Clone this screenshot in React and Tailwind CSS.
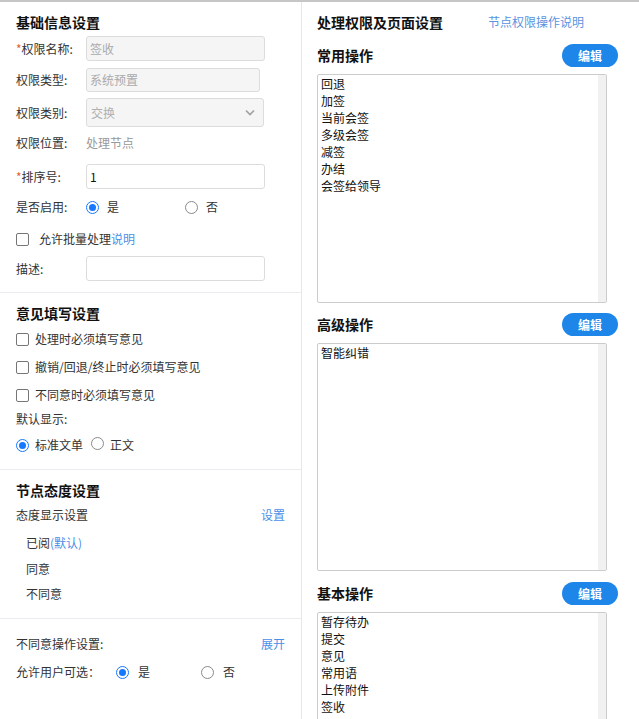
import React from 'react';

const font = { fontFamily: '"Noto Sans CJK SC", "Microsoft YaHei", sans-serif' };

const Radio = ({ checked }) => (
  <span
    className={`inline-flex h-[13px] w-[13px] shrink-0 items-center justify-center rounded-full border ${
      checked ? 'border-[#1677ff]' : 'border-[#8a8a8a]'
    } bg-white`}
  >
    {checked && <span className="h-[7px] w-[7px] rounded-full bg-[#1677ff]" />}
  </span>
);

const Checkbox = () => (
  <span className="inline-block h-[13px] w-[13px] shrink-0 rounded-[2px] border border-[#767676] bg-white" />
);

const Label = ({ children, required }) => (
  <span className="w-[70px] shrink-0 text-[12px] text-[#333]">
    {required && <span className="text-[#e0632b]">*</span>}
    {children}
  </span>
);

const SectionTitle = ({ children, className = '' }) => (
  <div className={`h-[20px] text-[14px] font-bold leading-[20px] text-[#111] ${className}`}>{children}</div>
);

const ListBox = ({ items, height }) => (
  <div className={`relative w-[290px] rounded-[2px] border border-[#cccccc] bg-white ${height}`}>
    <div className="absolute right-0 top-0 bottom-0 w-[8px] bg-[#f1f1f1]" />
    <div className="px-[3px] text-[12px] leading-[17px] text-[#111]">
      {items.map((item) => (
        <div key={item}>{item}</div>
      ))}
    </div>
  </div>
);

const OpGroup = ({ title, items, height, className = '' }) => (
  <div className={className}>
    <div className="flex h-[23px] w-[301px] items-center justify-between">
      <span className="text-[14px] font-bold text-[#111]">{title}</span>
      <button className="h-[23px] w-[56px] rounded-full bg-[#1e86e8] text-[12px] font-bold text-white">编辑</button>
    </div>
    <div className="mt-[7px]">
      <ListBox items={items} height={height} />
    </div>
  </div>
);

export default function App() {
  return (
    <div style={font} className="flex h-[719px] w-[639px] overflow-hidden border-t-2 border-[#c6c6c6] bg-white">
      {/* left column */}
      <div className="w-[302px] shrink-0 border-r border-[#e6e6ee]">
        <div className="px-[16px] pt-[10px]">
          <SectionTitle>基础信息设置</SectionTitle>
          <div className="mt-[4px] flex h-[25px] items-center">
            <Label required>权限名称:</Label>
            <div className="flex h-[25px] w-[179px] items-center rounded-[3px] border border-[#dcdcdc] bg-[#f5f5f5] px-[3px] text-[12px] text-[#aaa]">
              签收
            </div>
          </div>
          <div className="mt-[7px] flex h-[24px] items-center">
            <Label>权限类型:</Label>
            <div className="flex h-[24px] w-[174px] items-center rounded-[3px] border border-[#dcdcdc] bg-[#f5f5f5] px-[3px] text-[12px] text-[#aaa]">
              系统预置
            </div>
          </div>
          <div className="mt-[6px] flex h-[29px] items-center">
            <Label>权限类别:</Label>
            <div className="flex h-[29px] w-[178px] items-center justify-between rounded-[3px] border border-[#dcdcdc] bg-[#f5f5f5] pl-[4px] pr-[8px] text-[12px] text-[#b0b0b0]">
              交换
              <svg width="10" height="7" viewBox="0 0 10 7" fill="none">
                <path d="M1 1.5L5 5.5L9 1.5" stroke="#a0a0a0" strokeWidth="1.6" />
              </svg>
            </div>
          </div>
          <div className="mt-[6px] flex h-[20px] items-center">
            <Label>权限位置:</Label>
            <span className="text-[12px] text-[#999]">处理节点</span>
          </div>
          <div className="mt-[11px] flex h-[25px] items-center">
            <Label required>排序号:</Label>
            <div className="flex h-[25px] w-[179px] items-center rounded-[3px] border border-[#dcdcdc] bg-white px-[3px] text-[12px] text-[#111]">
              1
            </div>
          </div>
          <div className="mt-[8px] flex h-[20px] items-center text-[12px] text-[#333]">
            <Label>是否启用:</Label>
            <span className="flex w-[99px] items-center">
              <Radio checked />
              <span className="ml-[8px]">是</span>
            </span>
            <Radio />
            <span className="ml-[8px]">否</span>
          </div>
          <div className="mt-[12px] flex h-[20px] items-center text-[12px] text-[#333]">
            <Checkbox />
            <span className="ml-[10px]">允许批量处理</span>
            <span className="text-[#4a8fe7]">说明</span>
          </div>
          <div className="mt-[7px] flex h-[25px] items-center">
            <Label>描述:</Label>
            <div className="h-[25px] w-[179px] rounded-[3px] border border-[#dcdcdc] bg-white" />
          </div>
        </div>

        <div className="mt-[11px] border-t border-[#ebebf0] px-[16px] pt-[10px]">
          <SectionTitle>意见填写设置</SectionTitle>
          <div className="mt-[2px]">
            {['处理时必须填写意见', '撤销/回退/终止时必须填写意见', '不同意时必须填写意见'].map((t) => (
              <div key={t} className="flex h-[28px] items-center text-[12px] text-[#333]">
                <Checkbox />
                <span className="ml-[6px]">{t}</span>
              </div>
            ))}
          </div>
          <div className="flex h-[20px] items-center text-[12px] text-[#333]">默认显示:</div>
          <div className="mt-[4px] flex h-[24px] items-center text-[12px] text-[#333]">
            <Radio checked />
            <span className="ml-[6px]">标准文单</span>
            <span className="ml-[8px]">
              <Radio />
            </span>
            <span className="ml-[6px]">正文</span>
          </div>
        </div>

        <div className="mt-[12px] border-t border-[#ebebf0] px-[16px] pt-[10px]">
          <SectionTitle>节点态度设置</SectionTitle>
          <div className="mt-[5px] flex h-[20px] items-center justify-between text-[12px] text-[#333]">
            <span>态度显示设置</span>
            <span className="text-[#4a8fe7]">设置</span>
          </div>
          <div className="mt-[5px] pl-[10px] text-[12px] text-[#333]">
            <div className="flex h-[26px] items-center">
              已阅<span className="text-[#4a8fe7]">(默认)</span>
            </div>
            <div className="flex h-[25px] items-center">同意</div>
            <div className="flex h-[26px] items-center">不同意</div>
          </div>
        </div>

        <div className="mt-[11px] border-t border-[#ebebf0] px-[16px] pt-[15px] text-[12px] text-[#333]">
          <div className="flex h-[20px] items-center justify-between">
            <span>不同意操作设置:</span>
            <span className="text-[#4a8fe7]">展开</span>
          </div>
          <div className="mt-[8px] flex h-[20px] items-center">
            <span className="w-[100px]">允许用户可选：</span>
            <span className="flex w-[85px] items-center">
              <Radio checked />
              <span className="ml-[9px]">是</span>
            </span>
            <Radio />
            <span className="ml-[9px]">否</span>
          </div>
        </div>
      </div>

      {/* right column */}
      <div className="flex-1 pl-[15px] pt-[10px]">
        <div className="flex h-[20px] items-center">
          <span className="w-[171px] text-[14px] font-bold text-[#111]">处理权限及页面设置</span>
          <span className="text-[12px] text-[#5b93e0]">节点权限操作说明</span>
        </div>
        <OpGroup
          className="mt-[12px]"
          title="常用操作"
          height="h-[229px]"
          items={['回退', '加签', '当前会签', '多级会签', '减签', '办结', '会签给领导']}
        />
        <OpGroup className="mt-[10px]" title="高级操作" height="h-[228px]" items={['智能纠错']} />
        <OpGroup
          className="mt-[11px]"
          title="基本操作"
          height="h-[140px]"
          items={['暂存待办', '提交', '意见', '常用语', '上传附件', '签收']}
        />
      </div>
    </div>
  );
}
